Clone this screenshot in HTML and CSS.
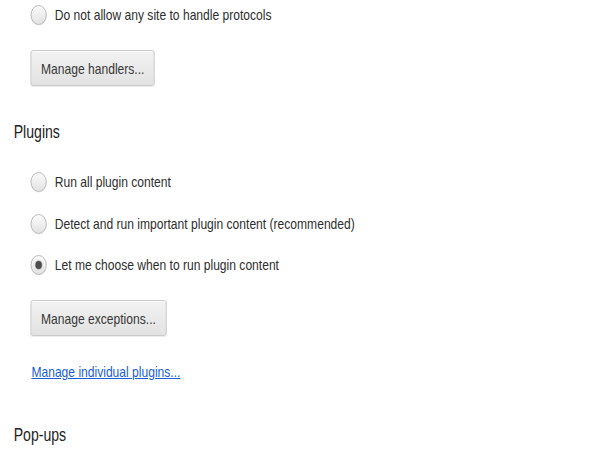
FILE: index.html
```html
<!DOCTYPE html>
<html lang="en">
<head>
<meta charset="utf-8">
<title>Content settings</title>
<link rel="stylesheet" href="styles.css">
</head>
<body>
<div class="page">
  <section class="group">
    <label class="radio-row">
      <span class="radio"></span>
      <span class="label-text">Do not allow any site to handle protocols</span>
    </label>
    <div class="btn-row">
      <button class="btn" type="button">Manage handlers...</button>
    </div>
  </section>

  <section class="group">
    <h3 class="section-title">Plugins</h3>
    <div class="radio-list">
      <label class="radio-row">
        <span class="radio"></span>
        <span class="label-text">Run all plugin content</span>
      </label>
      <label class="radio-row">
        <span class="radio"></span>
        <span class="label-text">Detect and run important plugin content (recommended)</span>
      </label>
      <label class="radio-row">
        <span class="radio checked"></span>
        <span class="label-text">Let me choose when to run plugin content</span>
      </label>
    </div>
    <div class="btn-row">
      <button class="btn" type="button">Manage exceptions...</button>
    </div>
    <div class="link-row">
      <a class="link" href="#">Manage individual plugins...</a>
    </div>
  </section>

  <section class="group">
    <h3 class="section-title popups">Pop-ups</h3>
  </section>
</div>
</body>
</html>
```

FILE: styles.css
```css
html, body {
  margin: 0;
  padding: 0;
  background: #ffffff;
  overflow: hidden;
}

body {
  font-family: "Liberation Sans", Arial, sans-serif;
  font-size: 15px;
  color: #2e2e2e;
}

.page {
  padding-left: 17px;
  box-sizing: border-box;
  transform: scaleX(0.805);
  transform-origin: 0 0;
}

.group {
  display: flex;
  flex-direction: column;
  align-items: flex-start;
}

.radio-list {
  display: flex;
  flex-direction: column;
  gap: 11.5px;
  margin-top: 23px;
}

.radio-row {
  display: flex;
  align-items: center;
  gap: 10px;
  height: 30px;
  margin-left: 21px;
  line-height: 30px;
  cursor: default;
}

.radio {
  box-sizing: border-box;
  width: 20px;
  height: 20px;
  border-radius: 50%;
  border: 1px solid #b0b0b0;
  background: linear-gradient(#fbfbfb, #e2e2e2);
  box-shadow: inset 0 1px 1px rgba(255, 255, 255, 0.9), 0 1px 0 rgba(0, 0, 0, 0.04);
  display: flex;
  align-items: center;
  justify-content: center;
  flex: none;
}

.radio.checked::after {
  content: "";
  width: 8px;
  height: 8px;
  border-radius: 50%;
  background: #4d4d4d;
  box-shadow: 0 0 0 1px rgba(80, 80, 80, 0.25);
}

.label-text {
  white-space: nowrap;
  color: #2e2e2e;
}

.btn-row {
  margin-top: 20px;
  margin-left: 21px;
}

.btn {
  font-family: inherit;
  font-size: 15px;
  color: #383838;
  height: 36px;
  padding: 0 12px;
  border: 1px solid #c4c4c4;
  border-radius: 3px;
  background: linear-gradient(#f2f2f2, #e2e2e2);
  box-shadow: inset 0 1px 0 rgba(255, 255, 255, 0.8), 0 1px 1px rgba(0, 0, 0, 0.08);
  cursor: default;
}

.section-title {
  margin: 34px 0 0 0;
  font-size: 17.5px;
  font-weight: normal;
  line-height: 24px;
  color: #222222;
}

.section-title.popups {
  margin-top: 41px;
}

.link-row {
  margin-top: 26px;
  margin-left: 22px;
  line-height: 20px;
}

.link {
  color: #1a5dd6;
  text-decoration: underline;
}
```
